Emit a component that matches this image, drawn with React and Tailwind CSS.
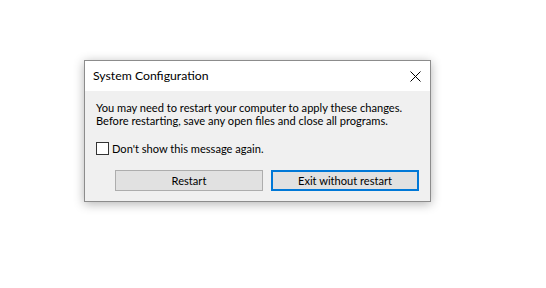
export default function App() {
  return (
    <div className="w-[546px] h-[288px] bg-white pl-[84px] pt-[60px] font-['Lato','Noto_Sans',sans-serif] text-[11.1px] text-black">
      <div className="w-[347px] border border-[#8c8c8c] shadow-[0_2px_10px_rgba(0,0,0,0.3)]">
        <div className="h-[30px] bg-white flex items-center justify-between pl-[8px] pr-[9px]">
          <span className="leading-[16px] whitespace-nowrap text-[12.25px]">System Configuration</span>
          <svg width="11" height="11" viewBox="0 0 11 11" className="text-black">
            <path d="M0.5 0.5 L10.5 10.5 M10.5 0.5 L0.5 10.5" stroke="currentColor" strokeWidth="1" fill="none" />
          </svg>
        </div>
        <div className="bg-[#f0f0f0] pt-[10px] pb-[10px] px-[11px]">
          <p className="leading-[13px] whitespace-nowrap">
            You may need to restart your computer to apply these changes.
            <br />
            Before restarting, save any open files and close all programs.
          </p>
          <label className="mt-[15px] flex items-center gap-[3px] leading-[13px]">
            <span className="w-[13px] h-[13px] border border-[#333] bg-white" />
            <span className="whitespace-nowrap">Don't show this message again.</span>
          </label>
          <div className="mt-[15px] flex justify-end gap-[8px]">
            <button className="w-[148px] h-[21px] bg-[#e1e1e1] border border-[#adadad] leading-none">
              Restart
            </button>
            <button className="w-[148px] h-[21px] bg-[#e1e1e1] border-2 border-[#0078d7] leading-none">
              Exit without restart
            </button>
          </div>
        </div>
      </div>
    </div>
  );
}
